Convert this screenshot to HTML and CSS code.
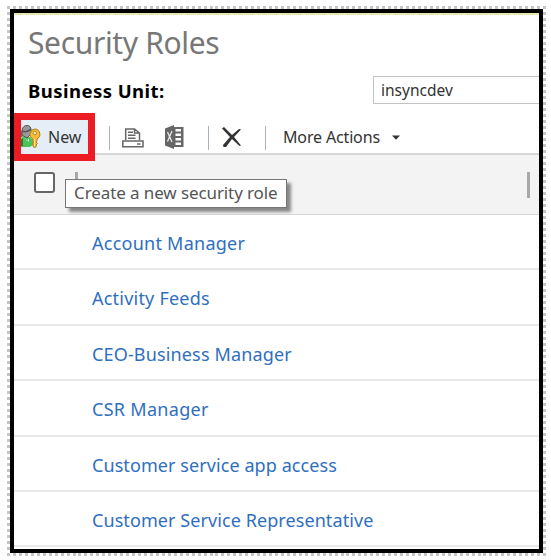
FILE: index.html
```html
<!DOCTYPE html>
<html lang="en">
<head>
<meta charset="utf-8">
<title>Security Roles</title>
<link rel="stylesheet" href="styles.css">
</head>
<body>
<div class="selection">
<main class="window">
  <h1 class="title"><span>Security Roles</span></h1>
  <div class="unit">
    <label class="unit-label" for="unit">Business Unit:</label>
    <div class="unit-field" id="unit"><span>insyncdev</span></div>
  </div>
  <div class="toolbar">
    <div class="new">
      <svg class="role-icon" width="20" height="24" viewBox="0 0 20 24">
        <path d="M0 13 3 11 9 12 12 15V20L9 22H0Z" fill="#4cc35a"/>
        <path d="M0 15 2 13V21H0Z" fill="#207c35"/>
        <path d="M3 12 6 16 8 13V17Z" fill="#d5eed8"/>
        <path d="M1 5Q2 .5 6 .5T10 5V9L6 13 1 10Z" fill="#999" stroke="#555"/>
        <path d="M1 6Q6 8 10 4" fill="none" stroke="#555" stroke-width="1.500"/>
        <path d="M0 6H1.500V12H0Z" fill="#666"/>
        <path d="M13.500 4a5.300 5.300 0 0 1 2.500 10V15.500L15 17 16.500 18.500 15 20 15.500 21 13.500 23 12 21V14a5.300 5.300 0 0 1 1.500-10Z" fill="#f5bd36" stroke="#b87917"/>
        <circle cx="13.800" cy="8" r="1.700" fill="#fff3bd" stroke="#9b681b" stroke-width=".7"/>
        <path d="M13.500 14V21" stroke="#ffe386"/>
      </svg>
      <span class="new-text">New</span>
    </div>
    <i class="divider"></i>
    <svg class="print-icon" width="22" height="20" viewBox="0 0 22 20" fill="none" stroke="#666" stroke-width="1.500">
      <path d="M3.700 12V1H12.500L17.500 5V12M12.500 1V5H17.500"/>
      <path d="M6 4.200H11M6 7.200H13.500M6 10.200H13.500"/>
      <path d="M.800 13H21V18.800H.800Z"/>
      <path d="M15 16H18.500" stroke-width="1.500"/>
    </svg>
    <svg class="excel-icon" width="20" height="24" viewBox="0 0 20 24">
      <path d="M0 3.500 9 0V24L0 20.500Z" fill="#666"/>
      <path d="M9 2H18.500V22H9Z" fill="#666"/>
      <path d="M10.500 4H16V6.500H10.500ZM10.500 8.500H16V11H10.500ZM10.500 13H16V15.500H10.500ZM10.500 17.500H16V20H10.500Z" fill="#fff"/>
      <path d="M2.500 7 7 17M7 6 2.500 16.500" stroke="#eee" stroke-width="1.200"/>
    </svg>
    <i class="divider second"></i>
    <svg class="delete-icon" width="20" height="21" viewBox="0 0 20 21" fill="#333">
      <path d="M0 1.500 2 0 10 8 17 2 19 2.500 12 10 19 18.500 17.500 19 10 12 4 20H1.500L1 18 8 10Z"/>
    </svg>
    <i class="divider third"></i>
    <span class="more"><span>More Actions</span></span>
    <svg class="arrow" width="8" height="5" viewBox="0 0 8 5"><path d="M0 .5H8L4 4.800Z" fill="#333"/></svg>
  </div>
  <div class="grid-head">
    <i class="checkbox"></i><i class="col-line"></i><i class="col-line end"></i>
    <div class="tooltip"><span>Create a new security role</span></div>
  </div>
  <ul class="roles">
    <li><a class="r1">Account Manager</a></li>
    <li><a class="r2">Activity Feeds</a></li>
    <li><a class="r3">CEO-Business Manager</a></li>
    <li><a class="r4">CSR Manager</a></li>
    <li><a class="r5">Customer service app access</a></li>
    <li><a class="r6">Customer Service Representative</a></li>
  </ul>
</main>
</div>
</body>
</html>
```
FILE: styles.css
```css
* { box-sizing: border-box; }
body { margin: 0; width: 551px; height: 560px; overflow: hidden; background: #fff; font-family: "Noto Sans", "Open Sans", sans-serif; }
.selection {
  width: 539px; height: 550px; margin: 6px 0 0 7px; padding: 3px;
  background:
    repeating-linear-gradient(90deg, #c6c6c6 0 3px, transparent 3px 5.956px) top / 100% 3px no-repeat,
    repeating-linear-gradient(90deg, #c6c6c6 0 3px, transparent 3px 5.956px) bottom / 100% 3px no-repeat,
    repeating-linear-gradient(180deg, #c6c6c6 0 3px, transparent 3px 6.011px) left / 3px 100% no-repeat,
    repeating-linear-gradient(180deg, #c6c6c6 0 3px, transparent 3px 6.011px) right / 3px 100% no-repeat;
}
.window { width: 533px; height: 544px; border: 4px solid #000; background: #fff; overflow: hidden; }
.title { height: 62px; margin: 0; padding-left: 14px; border-top: 2px solid #e6e6af; font-size: 30px; font-weight: 400; line-height: 56px; letter-spacing: -0.35px; color: #777; white-space: nowrap; }
.unit { display: flex; height: 30px; }
.unit-label { width: 359px; padding-left: 14px; font-size: 18.500px; letter-spacing: .45px; line-height: 31px; font-weight: 700; color: #000; white-space: nowrap; }
.unit-field { flex: 1; height: 28px; margin-top: 1px; border: 1px solid #c4c4c4; border-right: 0; padding-left: 7px; font-size: 15.500px; line-height: 27px; color: #333; }
.toolbar { display: flex; align-items: flex-start; height: 50px; padding-top: 8px; border-bottom: 2px solid #d7d7d7; font-size: 16px; color: #333; white-space: nowrap; }
.new { display: flex; width: 81px; height: 48px; flex: none; border: 7px solid #ed1c24; background: #e5eef7; position: relative; z-index: 2; }
.role-icon { margin-top: 5px; flex: none; }
.new-text { margin-left: 7px; line-height: 34px; }
.divider { flex: none; width: 1px; height: 24px; margin: 13px 0 0 14px; background: #a9b2bd; }
.print-icon { margin: 15px 0 0 12px; flex: none; }
.excel-icon { margin: 12px 0 0 21px; flex: none; }
.second { margin-left: 23px; }
.delete-icon { margin: 14px 0 0 13px; flex: none; }
.third { margin-left: 23px; }
.more { width: 98px; margin-left: 17px; line-height: 48px; letter-spacing: -.15px; }
.arrow { margin: 22px 0 0 11px; flex: none; }
.grid-head { position: relative; display: flex; height: 60px; background: #f3f3f3; border-bottom: 1px solid #d8d8d8; }
.checkbox { width: 21px; height: 21px; margin: 17px 0 0 20px; border: 2px solid #666; border-radius: 3px; background: #fff; }
.col-line { width: 3px; height: 26px; margin: 17px 0 0 20px; background: #a8a8a8; }
.col-line.end { margin-left: auto; margin-right: 9px; }
.tooltip { position: absolute; left: 51px; top: 24px; width: 222px; height: 29px; padding-left: 8px; border: 1px solid #777; background: #fff; box-shadow: 4px 4px 3px #888; font-size: 17px; line-height: 26px; letter-spacing: -.1px; color: #555; white-space: nowrap; }
.roles { margin: 0; padding: 0; list-style: none; }
.roles li { height: 55.400px; padding-left: 78px; border-bottom: 2px solid #e9e9e9; font-size: 18px; line-height: 56px; color: #2f6fc0; white-space: nowrap; }
.r1 { letter-spacing: .25px; }
.r2 { letter-spacing: .22px; }
.r3 { letter-spacing: .15px; }
.r4 { letter-spacing: .3px; }
.r5 { letter-spacing: .08px; }
.r6 { letter-spacing: .08px; }
```
